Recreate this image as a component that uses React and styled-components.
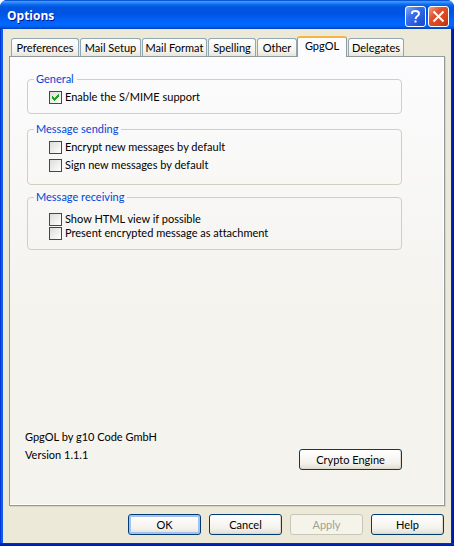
import React, { useState } from 'react';
import styled, { createGlobalStyle } from 'styled-components';

const Global = createGlobalStyle`
  * { box-sizing: border-box; }
  body { margin: 0; background: #fff; font-variant-ligatures: none; }
  body, button, input { font: 11px/14px Lato, "Liberation Sans", sans-serif; color: #000; }
`;

const Window = styled.div`
  min-height: 100vh;
  display: flex;
  flex-direction: column;
  padding: 0 3px 3px;
  font-variant-ligatures: none;
  background:
    linear-gradient(#0030d0, #0016a0) bottom / 100% 3px no-repeat,
    linear-gradient(90deg, #0019cf 0, #0855dd 1px, #1666f0 2px, #0855dd 3px, #0855dd calc(100% - 3px), #0030d0 calc(100% - 3px), #0016a0 calc(100% - 1px));
  border-radius: 7px 7px 0 0;
  overflow: hidden;
`;

const TitleBar = styled.header`
  height: 29px;
  margin: 0 -3px;
  padding: 3px 5px 0 7px;
  display: flex;
  align-items: center;
  gap: 2px;
  background: linear-gradient(#0a57d8 0, #0a57d8 1px, #3d95ff 1px, #3d95ff 2px, #1070f0 4px, #0055e0 7px, #0054e3 14px, #0062fa 20px, #0068ff 25px, #005be8 27px, #003dc0 29px);
`;

const Title = styled.h1`
  flex: 1;
  margin: 0;
  font: bold 12px/18px "Open Sans", sans-serif;
  color: #fff;
  text-shadow: 1px 1px 0 #0a1883;
`;

const CaptionButton = styled.button`
  width: 21px;
  height: 21px;
  padding: 0;
  border: 1px solid #fff;
  border-radius: 3px;
  background: ${(p) => (p.$close
    ? 'linear-gradient(135deg, #f0a088 0, #e0532f 35%, #d8431c 70%, #b83010 100%)'
    : 'linear-gradient(135deg, #86abf5 0, #3c70ec 35%, #2358e0 70%, #1a48c0 100%)')};
  svg { display: block; }
`;

const Body = styled.div`
  flex: 1;
  display: flex;
  flex-direction: column;
  padding: 7px 6px 8px;
  background: #ece9d8;
`;

const TabList = styled.div`
  display: flex;
  align-items: flex-end;
  padding-left: 2px;
  height: 20px;
`;

const Tab = styled.button`
  flex: none;
  width: ${(p) => p.$width}px;
  height: 18px;
  margin-right: ${(p) => (p.$joined ? 0 : 1)}px;
  padding: 1px 0 0;
  white-space: nowrap;
  border: 1px solid #91a7b4;
  border-bottom: 0;
  border-radius: 3px 3px 0 0;
  background: linear-gradient(#fff, #f4f3ec 70%, #e8e6da);

  &[aria-selected='true'] {
    position: relative;
    height: 21px;
    margin-bottom: -1px;
    padding-bottom: 4px;
    border-color: #919b9c;
    border-top: 2px solid #f8b43c;
    background: #fcfcfe;
  }
`;

const Panel = styled.section`
  flex: 1;
  display: flex;
  flex-direction: column;
  padding: 15px 42px 35px 15px;
  border: 1px solid #919b9c;
  box-shadow: 1px 1px 0 #d8d4c4, inset -1px -1px 0 #fff;
  background: linear-gradient(#fcfcfe, #f4f3ee 55%);
`;

const Group = styled.fieldset`
  min-width: 0;
  margin: 0 0 ${(p) => p.$after}px 2px;
  padding: ${(p) => p.$top}px 21px ${(p) => p.$bottom}px;
  border: 1px solid #d0d0bf;
  border-radius: 4px;
  display: flex;
  flex-direction: column;
  gap: ${(p) => p.$gap}px;
`;

const Legend = styled.legend`
  margin-left: -15px;
  padding: 0 3px 0 2px;
  color: #0046d5;
`;

const Option = styled.label`
  display: flex;
  align-items: center;
  gap: 3px;
  height: 14px;
`;

const Check = styled.input`
  appearance: none;
  flex: none;
  width: 13px;
  height: 13px;
  margin: 0;
  border: 1px solid #1c5180;
  background: linear-gradient(135deg, #dcdcd7, #fff);
`;

const CheckBox = styled.span`
  display: grid;
  > * { grid-area: 1 / 1; }
  svg { pointer-events: none; z-index: 1; }
`;

const PanelFooter = styled.div`
  margin-top: auto;
  display: flex;
  align-items: flex-end;
  justify-content: space-between;
`;

const About = styled.p`
  margin: 0 0 6px;
  line-height: 18px;
`;

const Button = styled.button`
  width: ${(p) => (p.$wide ? 103 : 73)}px;
  height: 21px;
  padding: 0;
  border: 1px solid #003c74;
  border-radius: 3px;
  background: linear-gradient(#fff, #f3f2ec 70%, #e2dfd2);
  box-shadow: ${(p) => (p.$primary ? 'inset 0 0 0 2px #a6c1f0' : 'inset -1px -1px 0 #dcd9cc')};

  &:disabled {
    color: #a1a192;
    border-color: #c9c7ba;
    background: #f5f4ea;
    box-shadow: none;
  }
`;

const Actions = styled.footer`
  display: flex;
  justify-content: flex-end;
  gap: 8px;
  padding: 8px 1px 0 0;
`;

const tabs = [
  ['Preferences', 68], ['Mail Setup', 61], ['Mail Format', 65], ['Spelling', 48],
  ['Other', 40], ['GpgOL', 50], ['Delegates', 56],
];

const groups = [
  { title: 'General', top: 4, bottom: 9, gap: 0, after: 8, items: ['Enable the S/MIME support'] },
  { title: 'Message sending', top: 4, bottom: 12, gap: 4, after: 5, items: ['Encrypt new messages by default', 'Sign new messages by default'] },
  { title: 'Message receiving', top: 8, bottom: 9, gap: 0, after: 0, items: ['Show HTML view if possible', 'Present encrypted message as attachment'] },
];

function CheckOption({ label, initial }) {
  const [on, setOn] = useState(initial);
  return (
    <Option>
      <CheckBox>
        <Check type="checkbox" checked={on} onChange={() => setOn(!on)} />
        {on && (
          <svg width="13" height="13" viewBox="0 0 13 13" shapeRendering="crispEdges" aria-hidden="true">
            <path d="M3 5h1v1h1v1h1v-1h1v-1h1v-1h1v-1h1v3h-1v1h-1v1h-1v1h-1v1h-1v-1h-1v-1h-1z" fill="#21a121" />
          </svg>
        )}
      </CheckBox>
      <span>{label}</span>
    </Option>
  );
}

export default function App() {
  const [active, setActive] = useState('GpgOL');
  return (
    <>
      <Global />
      <Window role="dialog" aria-labelledby="title">
        <TitleBar>
          <Title id="title">Options</Title>
          <CaptionButton aria-label="Help">
            <svg width="19" height="19" viewBox="0 0 19 19" fill="none" stroke="#fff" strokeWidth="2">
              <path d="M6 7V6q0-2 3.500-2T13 6.500q0 1.500-1.500 2.500T9.500 12" />
              <path d="M8.500 14.500h2" />
            </svg>
          </CaptionButton>
          <CaptionButton $close aria-label="Close">
            <svg width="19" height="19" viewBox="0 0 19 19" stroke="#fff" strokeWidth="2">
              <path d="M4.500 4.500l10 10M14.500 4.500l-10 10" />
            </svg>
          </CaptionButton>
        </TitleBar>
        <Body>
          <TabList role="tablist">
            {tabs.map(([name, width]) => (
              <Tab key={name} role="tab" $width={width} $joined={name === 'Other'}
                aria-selected={active === name} onClick={() => setActive(name)}>{name}</Tab>
            ))}
          </TabList>
          <Panel role="tabpanel">
            {groups.map((g) => (
              <Group key={g.title} $top={g.top} $bottom={g.bottom} $gap={g.gap} $after={g.after}>
                <Legend>{g.title}</Legend>
                {g.items.map((item) => (
                  <CheckOption key={item} label={item} initial={g.title === 'General'} />
                ))}
              </Group>
            ))}
            <PanelFooter>
              <About>GpgOL by g10 Code GmbH<br />Version 1.1.1</About>
              <Button $wide>Crypto Engine</Button>
            </PanelFooter>
          </Panel>
          <Actions>
            <Button $primary>OK</Button>
            <Button>Cancel</Button>
            <Button disabled>Apply</Button>
            <Button>Help</Button>
          </Actions>
        </Body>
      </Window>
    </>
  );
}
